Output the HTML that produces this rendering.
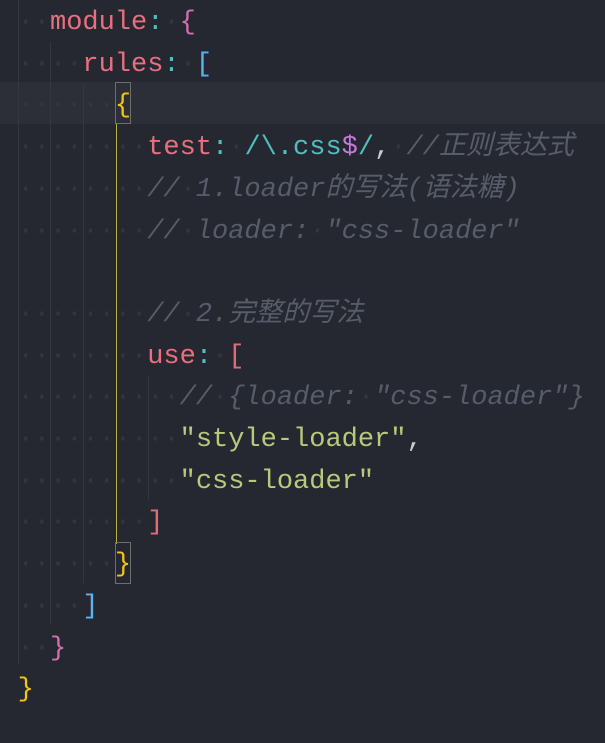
<!DOCTYPE html>
<html><head><meta charset="utf-8"><style>
html,body{margin:0;padding:0;}
body{width:605px;height:743px;background:#262831;overflow:hidden;position:relative;
font-family:"Liberation Mono","Noto Sans CJK SC",monospace;font-size:27px;}
.band{position:absolute;left:0;top:82px;width:605px;height:42px;background:#2c2f38;}
#c{position:absolute;left:0;top:3px;width:605px;height:740px;}
.l{position:absolute;left:17.6px;height:41.7px;line-height:41.7px;white-space:pre;color:#c8ccd4;}
.d{color:#33363f;}
.k{color:#e8707e;}
.c{color:#4fbfbf;}
.m{color:#d370b0;}
.b{color:#5fb0ee;}
.y{color:#f0c419;}
.g{color:#565c69;font-style:italic;}
.s{color:#b8c97a;}
.p{color:#c678dd;}
.w{color:#c8ccd4;}
.r{color:#e06c75;}
.gd{position:absolute;width:1px;background:#343741;}
.box{position:absolute;border:1px solid #6d6f6a;}
</style></head><body>
<div class="band"></div>
<div class="gd" style="left:18px;top:0;height:665px"></div>
<div class="gd" style="left:50px;top:42px;height:582px"></div>
<div class="gd" style="left:83px;top:83px;height:500px"></div>
<div class="gd" style="left:116px;top:124px;height:420px;background:#b9b23e"></div>
<div class="gd" style="left:148px;top:375px;height:125px"></div>
<div class="box" style="left:115px;top:82px;width:14px;height:40px"></div>
<div class="box" style="left:115px;top:542px;width:14px;height:40px"></div>
<div id="c">
<div class="l" style="top:0px"><span class="d">··</span><span class="k">module</span><span class="c">:</span><span class="d">·</span><span class="m">{</span></div>
<div class="l" style="top:41.7px"><span class="d">····</span><span class="k">rules</span><span class="c">:</span><span class="d">·</span><span class="b">[</span></div>
<div class="l" style="top:83.4px"><span class="d">······</span><span class="y">{</span></div>
<div class="l" style="top:125.1px"><span class="d">········</span><span class="k">test</span><span class="c">:</span><span class="d">·</span><span class="c">/\.css</span><span class="p">$</span><span class="c">/</span><span class="w">,</span><span class="d">·</span><span class="g">//正则表达式</span></div>
<div class="l" style="top:166.8px"><span class="d">········</span><span class="g">//<span class="d">·</span>1.loader的写法(语法糖)</span></div>
<div class="l" style="top:208.5px"><span class="d">········</span><span class="g">//<span class="d">·</span>loader:<span class="d">·</span>"css-loader"</span></div>
<div class="l" style="top:250.2px"></div>
<div class="l" style="top:291.9px"><span class="d">········</span><span class="g">//<span class="d">·</span>2.完整的写法</span></div>
<div class="l" style="top:333.6px"><span class="d">········</span><span class="k">use</span><span class="c">:</span><span class="d">·</span><span class="r">[</span></div>
<div class="l" style="top:375.3px"><span class="d">··········</span><span class="g">//<span class="d">·</span>{loader:<span class="d">·</span>"css-loader"}</span></div>
<div class="l" style="top:417px"><span class="d">··········</span><span class="s">"style-loader"</span><span class="w">,</span></div>
<div class="l" style="top:458.7px"><span class="d">··········</span><span class="s">"css-loader"</span></div>
<div class="l" style="top:500.4px"><span class="d">········</span><span class="r">]</span></div>
<div class="l" style="top:542.1px"><span class="d">······</span><span class="y">}</span></div>
<div class="l" style="top:583.8px"><span class="d">····</span><span class="b">]</span></div>
<div class="l" style="top:625.5px"><span class="d">··</span><span class="m">}</span></div>
<div class="l" style="top:667.2px"><span class="y">}</span></div>
</div>
</body></html>
